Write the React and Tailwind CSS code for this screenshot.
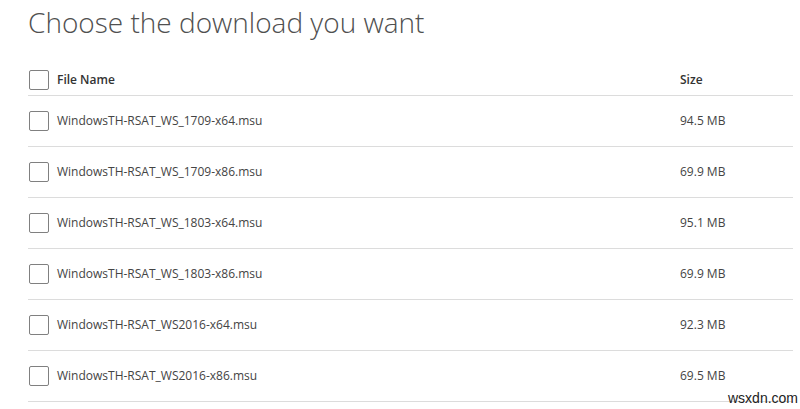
import React from "react";

const rows = [
  ["WindowsTH-RSAT_WS_1709-x64.msu", "94.5 MB"],
  ["WindowsTH-RSAT_WS_1709-x86.msu", "69.9 MB"],
  ["WindowsTH-RSAT_WS_1803-x64.msu", "95.1 MB"],
  ["WindowsTH-RSAT_WS_1803-x86.msu", "69.9 MB"],
  ["WindowsTH-RSAT_WS2016-x64.msu", "92.3 MB"],
  ["WindowsTH-RSAT_WS2016-x86.msu", "69.5 MB"],
];

function Box() {
  return <div className="w-[20px] h-[20px] border border-[#808080] rounded-[2px] bg-white shrink-0" />;
}

export default function App() {
  return (
    <div className="relative w-[800px] h-[409px] bg-white overflow-hidden" style={{ fontFamily: '"Open Sans", "Noto Sans", sans-serif' }}>
      <div className="pl-[28px] pr-[7px]">
        <h1 className="text-[28px] leading-[44px] font-light text-[#505050]">
          Choose the download you want
        </h1>
        <div className="mt-[20px] flex items-center h-[32px] border-b border-[#dcdcdc]">
          <div className="pl-[1px]"><Box /></div>
          <div className="ml-[8px] w-[623px] text-[12px] font-semibold text-[#333]">File Name</div>
          <div className="text-[12px] font-semibold text-[#333]">Size</div>
        </div>
        {rows.map(([n, s]) => (
          <div key={n} className="flex items-center h-[51px] border-b border-[#dcdcdc]">
            <div className="pl-[1px]"><Box /></div>
            <div className="ml-[8px] w-[623px] text-[12px] text-[#444]">{n}</div>
            <div className="text-[12px] text-[#444]">{s}</div>
          </div>
        ))}
      </div>
      <div className="absolute left-[728px] top-[391px] text-[14px] text-[#222] leading-none" style={{ fontFamily: '"Liberation Sans", sans-serif' }}>
        wsxdn.com
      </div>
    </div>
  );
}
